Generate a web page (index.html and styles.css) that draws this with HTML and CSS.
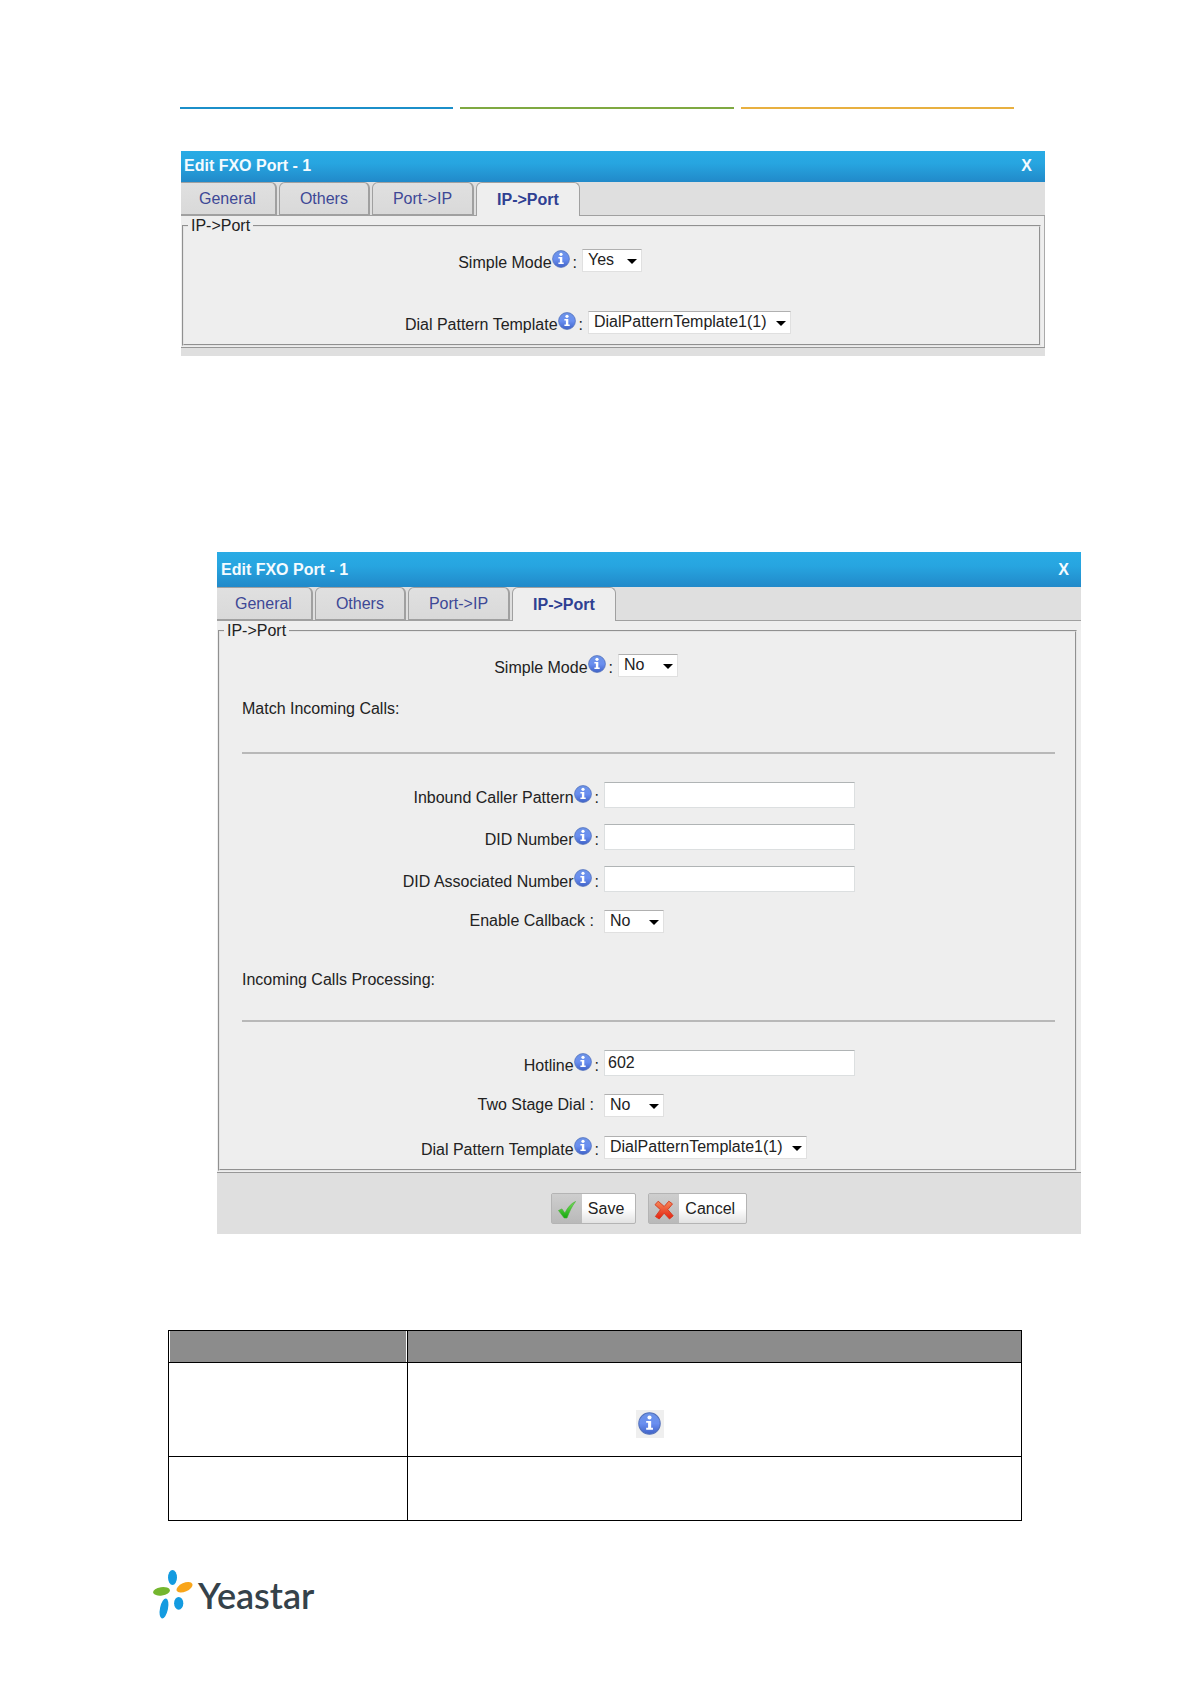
FILE: index.html
```html
<!DOCTYPE html>
<html lang="en">

<head>
  <meta charset="UTF-8" />
  <meta name="viewport" content="width=device-width, initial-scale=1.0" />
  <title>Edit FXO Port</title>
  <link rel="stylesheet" href="styles.css">
</head>

<body>
  <svg class="sprite" aria-hidden="true">
    <defs>
      <linearGradient id="info-fill" x1="0" y1="0" x2="0" y2="1">
        <stop offset="0" stop-color="#6c93e6" />
        <stop offset="0.5" stop-color="#6a8ff0" />
        <stop offset="1" stop-color="#3f62c8" />
      </linearGradient>
      <linearGradient id="check-fill" x1="0" y1="0" x2="0" y2="1">
        <stop offset="0" stop-color="#7be05e" />
        <stop offset="1" stop-color="#12a80c" />
      </linearGradient>
      <linearGradient id="cross-fill" x1="0" y1="0" x2="0" y2="1">
        <stop offset="0" stop-color="#f58a5a" />
        <stop offset="1" stop-color="#e5200f" />
      </linearGradient>
    </defs>
    <symbol id="info" viewBox="0 0 18 18">
      <circle cx="9" cy="9" r="8.4" fill="url(#info-fill)" stroke="#5573bd" stroke-width="0.8" />
      <circle cx="9" cy="4.3" r="1.6" fill="#fff" />
      <path d="M6.4 7h3.9v5.4h1.4v1.5H6.4v-1.5h1.5V8.4H6.4z" fill="#fff" />
    </symbol>
  </svg>

  <header class="rules">
    <span class="rule rule-blue"></span>
    <span class="rule rule-green"></span>
    <span class="rule rule-orange"></span>
  </header>

  <main>
    <section class="panel panel-simple">
      <div class="titlebar">
        <h2>Edit FXO Port - 1</h2>
        <button type="button" class="close">X</button>
      </div>
      <div class="tabs">
        <button type="button" class="tab">General</button>
        <button type="button" class="tab">Others</button>
        <button type="button" class="tab">Port-&gt;IP</button>
        <button type="button" class="tab active">IP-&gt;Port</button>
      </div>
      <form class="panel-body">
        <fieldset>
          <legend>IP-&gt;Port</legend>
          <div class="row row-mode">
            <label for="simple-mode-1">Simple Mode<svg class="info"><use href="#info" /></svg>:</label>
            <span class="select"><select id="simple-mode-1"><option>Yes</option><option>No</option></select></span>
          </div>
          <div class="row row-template">
            <label for="template-1">Dial Pattern Template<svg class="info"><use href="#info" /></svg>:</label>
            <span class="select wide"><select id="template-1"><option>DialPatternTemplate1(1)</option></select></span>
          </div>
        </fieldset>
      </form>
      <div class="panel-footer"></div>
    </section>

    <section class="panel panel-full">
      <div class="titlebar">
        <h2>Edit FXO Port - 1</h2>
        <button type="button" class="close">X</button>
      </div>
      <div class="tabs">
        <button type="button" class="tab">General</button>
        <button type="button" class="tab">Others</button>
        <button type="button" class="tab">Port-&gt;IP</button>
        <button type="button" class="tab active">IP-&gt;Port</button>
      </div>
      <form class="panel-body" id="port-form">
        <fieldset>
          <legend>IP-&gt;Port</legend>
          <div class="row row-mode">
            <label for="simple-mode-2">Simple Mode<svg class="info"><use href="#info" /></svg>:</label>
            <span class="select"><select id="simple-mode-2"><option>No</option><option>Yes</option></select></span>
          </div>

          <h3>Match Incoming Calls:</h3>
          <hr>
          <div class="rows">
            <div class="row">
              <label for="caller">Inbound Caller Pattern<svg class="info"><use href="#info" /></svg>:</label>
              <input type="text" id="caller" />
            </div>
            <div class="row">
              <label for="did">DID Number<svg class="info"><use href="#info" /></svg>:</label>
              <input type="text" id="did" />
            </div>
            <div class="row">
              <label for="did-assoc">DID Associated Number<svg class="info"><use href="#info" /></svg>:</label>
              <input type="text" id="did-assoc" />
            </div>
            <div class="row">
              <label for="callback" class="plain">Enable Callback :</label>
              <span class="select"><select id="callback"><option>No</option><option>Yes</option></select></span>
            </div>
          </div>

          <h3 class="processing">Incoming Calls Processing:</h3>
          <hr>
          <div class="rows">
            <div class="row">
              <label for="hotline">Hotline<svg class="info"><use href="#info" /></svg>:</label>
              <input type="text" id="hotline" value="602" />
            </div>
            <div class="row">
              <label for="two-stage" class="plain">Two Stage Dial :</label>
              <span class="select"><select id="two-stage"><option>No</option><option>Yes</option></select></span>
            </div>
            <div class="row">
              <label for="template-2">Dial Pattern Template<svg class="info"><use href="#info" /></svg>:</label>
              <span class="select wide"><select id="template-2"><option>DialPatternTemplate1(1)</option></select></span>
            </div>
          </div>
        </fieldset>
      </form>
      <div class="panel-footer">
        <button type="submit" form="port-form" class="btn">
          <span class="btn-icon">
            <svg width="20" height="20" viewBox="0 0 20 20"><path d="M1.5 10.5l3.4-1.6 3 4.2C10.300 8 13.500 3.800 18.500 1.500c-3.800 5-6 10-8.500 16.500H7.200z" fill="url(#check-fill)" stroke="#3fae2c" stroke-width="0.6" /></svg>
          </span>
          <span class="btn-text">Save</span>
        </button>
        <button type="button" class="btn">
          <span class="btn-icon">
            <svg width="20" height="20" viewBox="0 0 20 20"><path d="M4.200 1.200l6 5.300 4.600-5.300 3.700 2.700-4.700 5.700 5.400 6.200-3.700 3.200-5.400-5.800-4.900 5.800-3.800-2.500 5-6.800-5.400-5z" fill="url(#cross-fill)" stroke="#d4371d" stroke-width="0.9" stroke-linejoin="round" /></svg>
          </span>
          <span class="btn-text">Cancel</span>
        </button>
      </div>
    </section>

    <table class="items">
      <tr>
        <th></th>
        <th></th>
      </tr>
      <tr class="item-tall">
        <td></td>
        <td><span class="info-box"><svg width="23" height="23"><use href="#info" /></svg></span></td>
      </tr>
      <tr class="item-short">
        <td></td>
        <td></td>
      </tr>
    </table>
  </main>

  <footer class="brand">
    <svg width="40" height="50" viewBox="0 0 40 50">
      <ellipse cx="19.500" cy="7.500" rx="4.500" ry="7.500" fill="#149be0" />
      <ellipse cx="8.500" cy="21.300" rx="8.500" ry="4.200" transform="rotate(-8 8.500 21.300)" fill="#74b62e" />
      <ellipse cx="31.500" cy="17.300" rx="8.500" ry="4.400" transform="rotate(-24 31.500 17.300)" fill="#f9a51a" />
      <ellipse cx="25.700" cy="33.300" rx="4.600" ry="6.400" fill="#149be0" />
      <ellipse cx="11" cy="38.500" rx="4" ry="10.200" transform="rotate(12 11 38.500)" fill="#149be0" />
    </svg>
    <span class="brand-name">Yeastar</span>
  </footer>
</body>

</html>
```

FILE: styles.css
```css
* { box-sizing: border-box; }

body {
  margin: 0;
  background: #fff;
  color: #222;
  font: 16px/20px "Liberation Sans", Arial, sans-serif;
}

button, input, select { font: inherit; color: inherit; margin: 0; }
h2, h3 { margin: 0; font-size: 16px; }
.sprite { position: absolute; width: 0; height: 0; }

/* three coloured lines on top of the page */
.rules { display: flex; gap: 7px; padding: 107px 176px 0 180px; }
.rule { flex: 1; height: 2px; }
.rule-blue { background: #1b8fc9; }
.rule-green { background: #7fa941; }
.rule-orange { background: #e8b040; }

/* panels */
.panel { background: #eee; }
.panel-simple { margin: 42px 145px 0 181px; }
.panel-full { margin: 196px 109px 0 217px; }

.titlebar {
  display: flex;
  justify-content: space-between;
  padding: 5px 13px 6px 3px;
  background: linear-gradient(#29abe5, #27a5e0 40%, #2189c9);
  color: #f4fbff;
}
.panel-full .titlebar { padding: 8px 12px 7px 4px; }
.close { padding: 0; border: 0; background: none; font-weight: bold; cursor: pointer; }

.tabs {
  display: flex;
  gap: 2px;
  height: 34px;
  background: #dfdfdf;
  border-bottom: 1px solid #a0a0a0;
}
.tab {
  padding: 0 20px;
  border: 1px solid #a0a0a0;
  border-right-width: 2px;
  border-radius: 6px 6px 0 0;
  background: linear-gradient(#e0e0e0, #d9d9d9);
  color: #3d4896;
}
.tab:first-child { padding: 0 19px 0 18px; border-left: 0; border-top-left-radius: 0; }
.tab.active {
  margin-bottom: -1px;
  border-bottom: 0;
  border-right-width: 1px;
  background: #eee;
  color: #2f4092;
  font-weight: bold;
}

.panel-body { padding: 0 4px 1px 1px; }
.panel-simple .panel-body { padding-right: 3px; border-right: 1px solid #aaa; }
fieldset { min-width: 0; margin: 0; padding: 11px 0 9px; border: 2px groove #e4e4e4; }
legend { margin-left: 4px; padding: 0 3px; }

/* form rows */
.rows { display: grid; gap: 16px; }
.row { display: flex; align-items: center; gap: 5px; height: 26px; }
.row label { flex: 0 0 379px; align-self: flex-end; text-align: right; }
.row .plain { align-self: center; padding-right: 5px; }
.row-mode label { flex-basis: 393px; }
.row-template { margin-top: 36px; }
.row-template label { flex-basis: 399px; }
.info { width: 18px; height: 18px; margin: 0 3px 0 0; vertical-align: baseline; }

h3 { margin: 21px 20px 33px 22px; font-weight: normal; }
.processing { margin: 36px 20px 30px 22px; }
hr { height: 2px; margin: 0 20px 28px 22px; border: 0; background: #b8b8b8; }

input {
  width: 251px;
  height: 26px;
  padding: 0 3px;
  border: 1px solid #dcdfe0;
  border-top-color: #b0b4b5;
  background: #fff;
}
.select { position: relative; width: 60px; height: 23px; }
.select.wide { width: 203px; }
.select select {
  display: block;
  width: 100%;
  height: 100%;
  padding: 0 5px;
  appearance: none;
  border: 1px solid #e0e0e0;
  border-top-color: #b0b0b0;
  border-radius: 0;
  background: #fff;
}
.select::after {
  content: "";
  position: absolute;
  top: 10px;
  right: 5px;
  border: 5px solid transparent;
  border-top-color: #000;
  border-bottom: 0;
  pointer-events: none;
}

.panel-footer {
  display: flex;
  justify-content: center;
  gap: 12px;
  min-height: 9px;
  border-top: 1px solid #979797;
  background: #dfdfdf;
}
.panel-full .panel-footer { padding: 20px 0 10px; }
.btn {
  display: flex;
  height: 31px;
  padding: 0;
  border: 1px solid #b4b4b4;
  border-radius: 2px;
  background: linear-gradient(#fff 50%, #e2e2e2);
}
.btn-icon { display: grid; place-items: center; width: 30px; height: 29px; padding-top: 3px; background: linear-gradient(#cecece, #b9b9b9); }
.btn-text { padding: 0 11px 0 6px; line-height: 29px; }

/* item table */
.items {
  width: calc(100% - 336px);
  margin: 96px 168px 0;
  border-collapse: collapse;
  table-layout: fixed;
}
.items th, .items td { border: 1px solid #000; padding: 0; }
.items th { height: 32px; background: #8c8c8c; }
.items th:first-child { width: 28%; box-shadow: inset 1px 0 #fff, inset -1px 0 #fff; }
.item-tall { height: 94px; }
.item-tall td { padding: 28px 0 0 228px; }
.item-short { height: 64px; }
.info-box { display: grid; place-items: center; width: 28px; height: 28px; background: #efefef; }

.brand { display: flex; gap: 5px; padding: 49px 153px 40px; }
.brand-name { font: 600 36px/50px Lato, sans-serif; color: #35424a; }
```
